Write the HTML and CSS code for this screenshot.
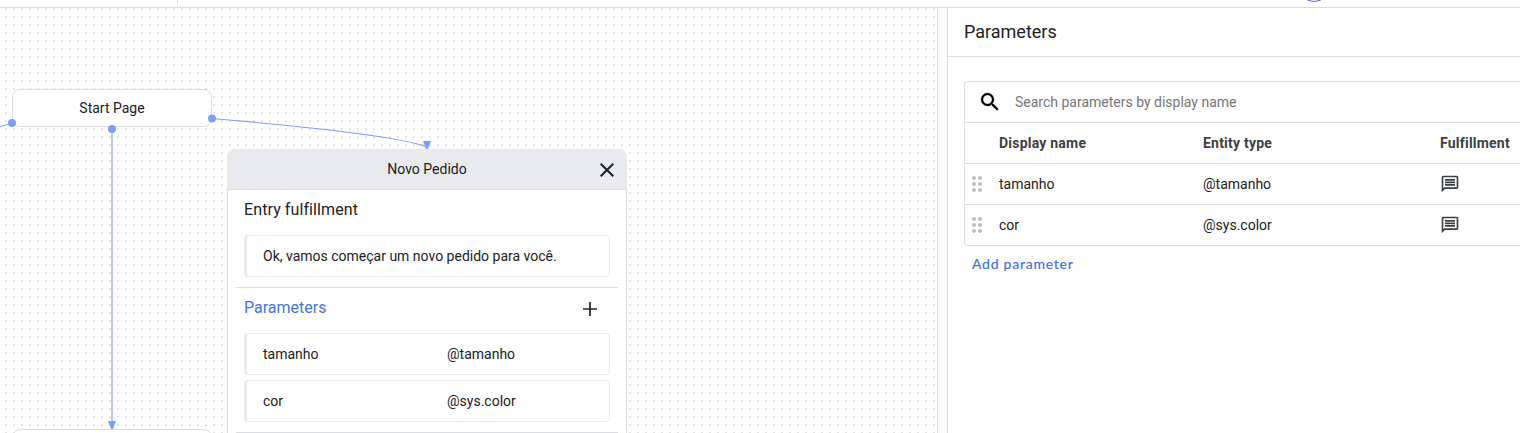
FILE: index.html
```html
<!DOCTYPE html>
<html lang="en">
<head>
<meta charset="utf-8">
<title>Flow builder</title>
<link rel="stylesheet" href="styles.css">
</head>
<body>
<header class="topbar">
  <span class="topbar-divider"></span>
  <span class="avatar-ring"></span>
</header>
<main class="workspace">
  <section class="canvas">
    <div class="node start-node">Start Page</div>
    <div class="node next-node"></div>
    <svg class="edges" width="937" height="425" viewBox="0 8 937 425" fill="none">
      <path d="M12 123L0 126.500M212 118.500C300 126 400 137 427 147" stroke="#7b9ff2" stroke-width="1.100"/>
      <path d="M112 129V424" stroke="#b9cbf8" stroke-width="2"/>
      <g fill="#7b9ff2">
        <circle cx="12" cy="123" r="4"/>
        <circle cx="112" cy="129" r="4"/>
        <circle cx="212" cy="118.500" r="4"/>
        <path d="M423 141h8l-3 8h-2zM108 421h8l-3 8h-2z"/>
      </g>
    </svg>
    <article class="node page-node">
      <header class="page-head">Novo Pedido
        <svg class="close" width="14" height="14" viewBox="0 0 14 14"><path d="M.7.700l12.600 12.600M13.300.700L.7 13.300" stroke="#202124" stroke-width="2"/></svg>
      </header>
      <section class="block entry">
        <h3 class="block-title">Entry fulfillment</h3>
        <div class="field">Ok, vamos começar um novo pedido para você.</div>
      </section>
      <section class="block params">
        <div class="block-row">
          <h3 class="block-title link">Parameters</h3>
          <svg width="14" height="14" viewBox="0 0 14 14"><path d="M7 0v14M0 7h14" stroke="#202124" stroke-width="1.700"/></svg>
        </div>
        <div class="field pair"><span>tamanho</span><span>@tamanho</span></div>
        <div class="field pair"><span>cor</span><span>@sys.color</span></div>
      </section>
    </article>
  </section>
  <aside class="panel">
    <h2 class="panel-title">Parameters</h2>
    <div class="table">
      <div class="search">
        <svg width="24" height="24" viewBox="0 0 24 24"><path d="M15.500 14h-.79l-.28-.27A6.470 6.470 0 0 0 16 9.500 6.500 6.500 0 1 0 9.500 16c1.610 0 3.090-.59 4.230-1.570l.27.280v.79l5 4.990L20.490 19zm-6 0C7.010 14 5 11.990 5 9.500S7.010 5 9.500 5 14 7.010 14 9.500 11.990 14 9.500 14z" fill="#000" stroke="#000" stroke-width=".3"/></svg>
        <span>Search parameters by display name</span>
      </div>
      <div class="row head"><span></span><span>Display name</span><span>Entity type</span><span>Fulfillment</span></div>
      <div class="row">
        <svg width="10" height="16" viewBox="0 0 10 16" fill="#bdbdbd"><circle cx="2" cy="2" r="2"/><circle cx="8" cy="2" r="2"/><circle cx="2" cy="8" r="2"/><circle cx="8" cy="8" r="2"/><circle cx="2" cy="14" r="2"/><circle cx="8" cy="14" r="2"/></svg>
        <span>tamanho</span><span>@tamanho</span>
        <svg class="chat" width="20" height="20" viewBox="0 0 24 24"><path fill="#3c4043" d="M4 2a2 2 0 0 0-1.990 2L2 22l4-4h14a2 2 0 0 0 2-2V4a2 2 0 0 0-2-2zm0 2h16v12H5.170L4 17.170zm2 8h12v2H6zm0-3h12v2H6zm0-3h12v2H6z"/></svg>
      </div>
      <div class="row">
        <svg width="10" height="16" viewBox="0 0 10 16" fill="#bdbdbd"><circle cx="2" cy="2" r="2"/><circle cx="8" cy="2" r="2"/><circle cx="2" cy="8" r="2"/><circle cx="8" cy="8" r="2"/><circle cx="2" cy="14" r="2"/><circle cx="8" cy="14" r="2"/></svg>
        <span>cor</span><span>@sys.color</span>
        <svg class="chat" width="20" height="20" viewBox="0 0 24 24"><path fill="#3c4043" d="M4 2a2 2 0 0 0-1.990 2L2 22l4-4h14a2 2 0 0 0 2-2V4a2 2 0 0 0-2-2zm0 2h16v12H5.170L4 17.170zm2 8h12v2H6zm0-3h12v2H6zm0-3h12v2H6z"/></svg>
      </div>
    </div>
    <div class="add">Add parameter</div>
  </aside>
</main>
</body>
</html>
```
FILE: styles.css
```css
* { box-sizing: border-box; }
body {
  margin: 0;
  height: 433px;
  overflow: hidden;
  background: #fff;
  color: #202124;
  font: 14px/20px Roboto, sans-serif;
}
h2, h3 { margin: 0; font-weight: 400; }
svg { display: block; flex: none; }
.topbar {
  position: relative;
  height: 8px;
  border-bottom: 1px solid #dadce0;
  overflow: hidden;
}
.topbar-divider {
  display: block;
  width: 1px;
  height: 4px;
  margin-left: 177px;
  background: #dadce0;
}
.avatar-ring {
  position: absolute;
  left: 1298px;
  top: -30px;
  width: 32px;
  height: 32px;
  border: 1px solid #8a4fd8;
  border-radius: 50%;
}
.workspace { display: flex; height: 425px; }
.canvas {
  position: relative;
  flex: none;
  width: 938px;
  overflow: hidden;
  border-right: 1px solid #dadce0;
  background: conic-gradient(from 90deg at 6px 6px, #e4e4e4 90deg, transparent 0) 
    -1px -6px / 8px 8px;
}
.node {
  position: absolute;
  border: 1px solid #dadce0;
  border-radius: 8px;
  background: #fff;
}
.start-node {
  left: 12px;
  top: 81px;
  width: 200px;
  height: 38px;
  line-height: 36px;
  text-align: center;
}
.next-node { left: 12px; top: 421px; width: 200px; height: 38px; }
.edges { position: absolute; left: 0; top: 0; }
.page-node { left: 227px; top: 141px; width: 400px; height: 340px; }
.page-head {
  position: relative;
  height: 41px;
  margin: -1px -1px 0;
  border-bottom: 1px solid #dadce0;
  border-radius: 8px 8px 0 0;
  background: #e8eaed;
  line-height: 40px;
  text-align: center;
}
.close { position: absolute; right: 13px; top: 14px; }
.block { margin: 0 8px; border-bottom: 1px solid #dadce0; }
.entry { height: 98px; padding: 8px 8px 0; }
.params { height: 145px; padding: 8px 8px 0; }
.block-title { font-size: 16px; line-height: 24px; }
.entry .block-title { letter-spacing: .1px; }
.link { color: #4374e0; }
.field {
  height: 42px;
  border: 1px solid #e8eaed;
  border-left-width: 3px;
  border-radius: 4px;
  padding-left: 16px;
  line-height: 40px;
}
.entry .field { margin-top: 13px; }
.block-row {
  display: flex;
  justify-content: space-between;
  align-items: center;
  height: 24px;
  margin-bottom: 13px;
  padding-right: 13px;
}
.block-row svg { margin-top: 1px; }
.pair { display: grid; grid-template-columns: 184px 1fr; }
.pair + .pair { margin-top: 5px; }
.panel {
  flex: 1;
  min-width: 0;
  margin-left: 9px;
  border-left: 1px solid #dadce0;
  overflow: hidden;
}
.panel-title {
  height: 49px;
  padding-left: 16px;
  border-bottom: 1px solid #dadce0;
  font-size: 18px;
  line-height: 47px;
}
.table {
  margin: 24px 0 0 16px;
  border: 1px solid #dadce0;
  border-right: 0;
  border-radius: 4px 0 0 4px;
}
.search {
  display: flex;
  align-items: center;
  gap: 13px;
  height: 40px;
  padding-left: 13px;
  color: #757575;
}
.row {
  display: grid;
  grid-template-columns: 27px 204px 237px 1fr;
  align-items: center;
  height: 41px;
  padding-left: 7px;
  border-top: 1px solid #dadce0;
}
.head { font-weight: 700; color: #3c4043; letter-spacing: .22px; }
.add {
  margin: 8px 0 0 24px;
  color: #4374e0;
  font: 500 14px/20px Lato, sans-serif;
  letter-spacing: .73px;
  -webkit-text-stroke: .1px #4374e0;
}
```
